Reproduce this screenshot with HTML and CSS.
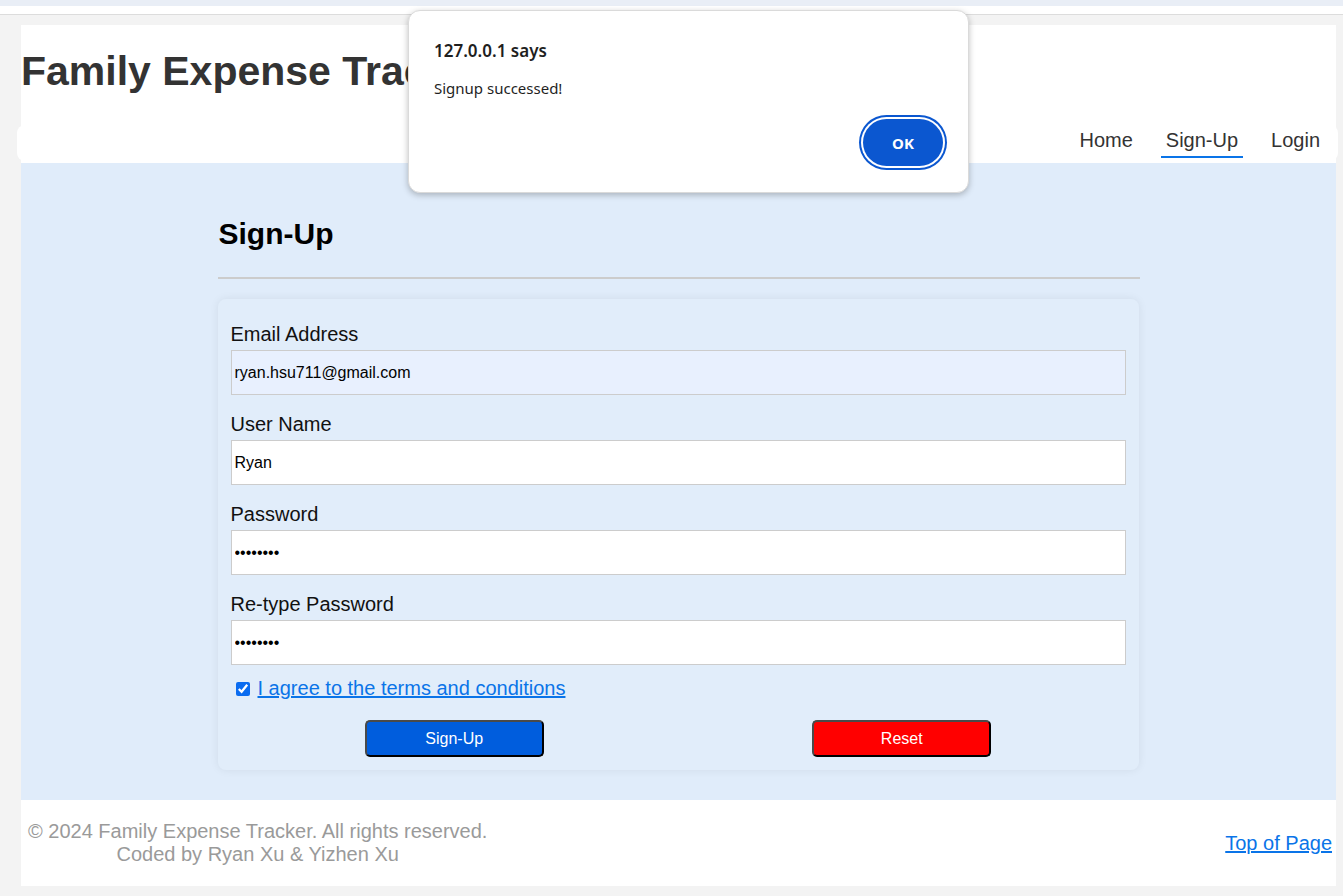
FILE: index.html
```html
<!DOCTYPE html>
<html lang="en">
<head>
<meta charset="utf-8">
<title>Family Expense Tracker - Sign-Up</title>
<link rel="stylesheet" href="styles.css">
</head>
<body>
<div class="browser-strip"></div>
<div class="browser-gap"></div>
<div class="page">
  <header class="site-header">
    <h1 class="site-title">Family Expense Tracker</h1>
  </header>
  <nav class="nav">
    <a class="nav-link" href="#">Home</a>
    <a class="nav-link active" href="#">Sign-Up</a>
    <a class="nav-link" href="#">Login</a>
  </nav>
  <main class="main">
    <div class="content">
      <h2 class="page-title">Sign-Up</h2>
      <hr class="divider">
      <form class="card">
        <div class="fields">
          <div class="field">
            <label class="field-label" for="email">Email Address</label>
            <input class="field-input autofill" id="email" type="email" value="ryan.hsu711@gmail.com">
          </div>
          <div class="field">
            <label class="field-label" for="uname">User Name</label>
            <input class="field-input" id="uname" type="text" value="Ryan">
          </div>
          <div class="field">
            <label class="field-label" for="pw">Password</label>
            <input class="field-input" id="pw" type="password" value="12345678">
          </div>
          <div class="field">
            <label class="field-label" for="pw2">Re-type Password</label>
            <input class="field-input" id="pw2" type="password" value="12345678">
          </div>
        </div>
        <div class="agree">
          <input class="agree-box" type="checkbox" checked> <a class="agree-link" href="#">I agree to the terms and conditions</a>
        </div>
        <div class="actions">
          <button class="btn btn-primary" type="button">Sign-Up</button>
          <button class="btn btn-danger" type="button">Reset</button>
        </div>
      </form>
    </div>
  </main>
  <footer class="footer">
    <div class="footer-text">© 2024 Family Expense Tracker. All rights reserved.<br>Coded by Ryan Xu &amp; Yizhen Xu</div>
    <a class="footer-link" href="#">Top of Page</a>
  </footer>
</div>

<div class="dialog">
  <div class="dialog-title">127.0.0.1 says</div>
  <div class="dialog-msg">Signup successed!</div>
  <div class="dialog-actions">
    <button class="dialog-ok" type="button">OK</button>
  </div>
</div>
</body>
</html>
```
FILE: styles.css
```css
* { box-sizing: border-box; }

html, body {
  margin: 0;
  padding: 0;
}

body {
  background: #f3f3f3;
  font-family: "Liberation Sans", Arial, sans-serif;
  color: #111;
  min-height: 896px;
}

.browser-strip {
  height: 6px;
  background: #e9eef6;
}

.browser-gap {
  height: 9px;
  background: #ffffff;
  border-bottom: 1px solid #dcdcdc;
}

.page {
  margin: 10px 7px 0 21px;
  background: #ffffff;
}

.site-header {
  padding: 23px 0 30px;
}

.site-title {
  margin: 0;
  font-size: 41px;
  line-height: 47px;
  font-weight: bold;
  color: #333;
}

.nav {
  display: flex;
  justify-content: flex-end;
  align-items: flex-start;
  gap: 23px;
  height: 36px;
  margin: 0 -2px 0 -4px;
  padding: 4px 13px 0 0;
  background: #ffffff;
  border-radius: 8px;
}

.nav-link {
  font-size: 20px;
  line-height: 23px;
  color: #333;
  text-decoration: none;
  padding: 0 5px 4px;
  border-bottom: 2px solid transparent;
}

.nav-link.active {
  border-bottom-color: #0a74e8;
}

.main {
  margin-top: 2px;
  background: #e0ecfa;
  padding: 54px 0 30px;
}

.content {
  width: 922px;
  margin: 0 auto;
}

.page-title {
  margin: 0;
  padding-left: 1px;
  font-size: 30px;
  line-height: 34px;
  font-weight: bold;
  color: #000;
}

.divider {
  border: 0;
  height: 2px;
  background: #cccccc;
  margin: 26px 0 20px;
}

.card {
  background: #e1edfa;
  border-radius: 8px;
  box-shadow: 0 0 10px rgba(0, 0, 0, 0.07);
  padding: 24px 13px 13px;
  width: 921px;
}

.fields {
  display: flex;
  flex-direction: column;
  gap: 18px;
}

.field {
  display: flex;
  flex-direction: column;
  gap: 4px;
}

.field-label {
  font-size: 20px;
  line-height: 23px;
  color: #111;
}

.field-input {
  width: 100%;
  height: 45px;
  border: 1px solid #cccccc;
  padding: 0 3px;
  font-family: "Liberation Sans", Arial, sans-serif;
  font-size: 16px;
  color: #000;
  background: #ffffff;
  outline: none;
}

.field-input.autofill {
  background: #e8f0fe;
}

.agree {
  margin-top: 12px;
  font-size: 20px;
  line-height: 23px;
  display: flex;
  align-items: center;
}

.agree-box {
  width: 14px;
  height: 14px;
  margin: 0 4px 0 5px;
  accent-color: #0a6cf0;
}

.agree-link {
  color: #0a74e8;
  margin-left: 4px;
}

.actions {
  margin-top: 20px;
  display: grid;
  grid-template-columns: 1fr 1fr;
  justify-items: center;
}

.btn {
  width: 179px;
  height: 37px;
  font-family: "Liberation Sans", Arial, sans-serif;
  font-size: 16px;
  color: #ffffff;
  border: 2px solid;
  border-color: #4a4a4a #000 #000 #4a4a4a;
  border-radius: 5px;
  cursor: pointer;
}

.btn-primary { background: #005ddd; }
.btn-danger { background: #ff0000; }

.footer {
  height: 86px;
  display: flex;
  align-items: center;
  justify-content: space-between;
  padding: 0 4px 0 7px;
}

.footer-text {
  text-align: center;
  font-size: 20px;
  line-height: 23px;
  color: #9a9a9a;
}

.footer-link {
  font-size: 20px;
  line-height: 23px;
  color: #0a74e8;
}

.dialog {
  position: absolute;
  left: 408px;
  top: 10px;
  width: 561px;
  height: 183px;
  background: #ffffff;
  border: 1px solid #dadada;
  border-radius: 12px;
  box-shadow: 0 2px 6px rgba(0, 0, 0, 0.25);
  padding: 28px 25px 0 25px;
  font-family: "Noto Sans", "Open Sans", sans-serif;
  display: flex;
  flex-direction: column;
}

.dialog-title {
  font-size: 17px;
  line-height: 24px;
  font-weight: 600;
  color: #1f1f1f;
}

.dialog-msg {
  margin-top: 15px;
  font-size: 15px;
  line-height: 21px;
  color: #1f1f1f;
}

.dialog-actions {
  display: flex;
  justify-content: flex-end;
  margin-top: 20px;
  padding-right: 0;
}

.dialog-ok {
  width: 80px;
  height: 47px;
  border: 0;
  border-radius: 24px;
  background: #0b57d0;
  color: #ffffff;
  font-family: "Noto Sans", "Open Sans", sans-serif;
  font-size: 15px;
  font-weight: bold;
  box-shadow: 0 0 0 2px #ffffff, 0 0 0 4px #0b57d0;
}
```
